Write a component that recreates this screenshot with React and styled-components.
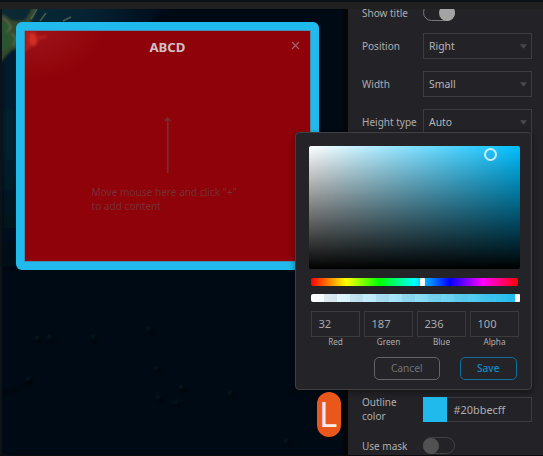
import React from "react";
import styled, { createGlobalStyle } from "styled-components";

const Global = createGlobalStyle`
  * { box-sizing: border-box; }
  body { margin: 0; background: #232327; font-family: "Noto Sans", "Open Sans", sans-serif; color: #adadaf; overflow: hidden; }
`;

const Window = styled.div`
  position: relative;
  display: flex;
  flex-direction: column;
  width: 543px;
  height: 456px;
  overflow: hidden;
  border-bottom: 1px solid #0c0c0f;
`;
const TopBar = styled.header`
  flex: none;
  height: 9px;
  background: #202020;
  border-top: 2px solid #0a1015;
`;
const Body = styled.div`
  flex: 1;
  min-height: 0;
  display: flex;
  overflow: hidden;
`;
const MapArea = styled.main`
  position: relative;
  flex: none;
  width: 348px;
  padding: 13px 0 0 14px;
  background: #000a14;
  border-left: 2px solid #0e1118;
  border-right: 5px solid #060607;
  overflow: hidden;
`;
const Terrain = styled.svg`
  position: absolute;
  left: 0;
  top: 0;
`;
const InfoFrame = styled.section`
  position: relative;
  width: 302.8px;
  height: 248px;
  padding: 8.7px 8.5px 9px;
  border-radius: 6px;
  background: #20bbec;
`;
const InfoContent = styled.div`
  position: relative;
  display: flex;
  flex-direction: column;
  height: 100%;
  background: radial-gradient(ellipse 90px 55px at 0 0, #9c151a, #900209 90%);
  box-shadow: 0 0 0 0.6px #61728a;
`;
const RedTerrain = styled.svg`
  position: absolute;
  left: 0;
  top: 0;
`;
const InfoHeader = styled.div`
  position: relative;
  display: flex;
  justify-content: center;
  height: 34px;
  padding-top: 8px;
`;
const InfoTitle = styled.h1`
  margin: 0;
  font-size: 13.2px;
  line-height: 17px;
  font-weight: 700;
  color: #cfc0c4;
`;
const CloseIcon = styled.svg`
  position: absolute;
  right: 10.3px;
  top: 10.2px;
`;
const Arrow = styled.svg`
  margin: 52px 0 0 138px;
`;
const Hint = styled.p`
  margin: 12px 0 0 67px;
  width: 160px;
  font-size: 10.1px;
  line-height: 14px;
  color: #743037;
`;
const Sidebar = styled.aside`
  flex: 1;
  display: flex;
  flex-direction: column;
  padding-left: 14px;
  background: #232327;
`;
const Field = styled.div`
  flex: none;
  display: flex;
  align-items: center;
  height: ${(p) => p.$height}px;
  margin-top: ${(p) => p.$gap || 0}px;
`;
const FieldLabel = styled.label`
  width: 61px;
  padding-right: ${(p) => p.$pad || 0}px;
  font-size: 10px;
  line-height: 14px;
  white-space: ${(p) => (p.$pad ? "normal" : "nowrap")};
`;
const Select = styled.div`
  display: flex;
  align-items: center;
  justify-content: space-between;
  width: 108.5px;
  height: 26px;
  padding: 0 4px 0 5px;
  border: 1px solid #3d3d40;
  font-size: 10.4px;
  color: #b6b6b8;
`;
const Switch = styled.div`
  display: flex;
  align-items: center;
  justify-content: ${(p) => (p.$on ? "flex-end" : "flex-start")};
  width: 32px;
  height: 17px;
  border: 1px solid ${(p) => (p.$on ? "#79797b" : "#434346")};
  border-radius: 9px;
  &::after {
    content: "";
    width: 16px;
    height: 16px;
    margin: 0 -1px;
    border-radius: 50%;
    background: ${(p) => (p.$on ? "#a3a3a4" : "#515153")};
  }
`;
const ColorField = styled.div`
  display: flex;
  align-items: center;
  width: 108.5px;
  height: 25px;
  border: 1px solid #3d3d40;
  font-size: 10.9px;
  color: #adadaf;
`;
const Swatch = styled.div`
  width: 24px;
  height: 25px;
  margin: 0 6.5px 0 -1px;
  background: #20bbec;
`;
const Marker = styled.div`
  position: absolute;
  left: 317px;
  top: 392px;
  width: 24px;
  height: 45px;
  border-radius: 12px;
  background: #ea571b;
  color: #f7ece8;
  font-size: 35px;
  line-height: 43px;
  padding-left: 2px;
`;
const Popover = styled.div`
  position: absolute;
  left: 295px;
  top: 132px;
  width: 237px;
  height: 258px;
  padding: 13.2px 10.5px 0 13px;
  border: 1px solid #404043;
  border-radius: 4px;
  background: #242428;
  box-shadow: 0 2px 6px rgba(0, 0, 0, 0.45);
  display: flex;
  flex-direction: column;
`;
const Saturation = styled.div`
  position: relative;
  flex: none;
  width: 211.2px;
  height: 123px;
  border-radius: 2px;
  background: linear-gradient(to top, #000, transparent), linear-gradient(to right, #fff, #00bfff);
`;
const Ring = styled.div`
  position: absolute;
  left: 175px;
  top: 2.3px;
  width: 13px;
  height: 13px;
  border: 2px solid #c9eefb;
  border-radius: 50%;
`;
const Bar = styled.div`
  position: relative;
  flex: none;
  width: 207px;
  height: 8.5px;
  margin: ${(p) => p.$gap}px 0 0 2px;
  border-radius: 2px;
`;
const HueBar = styled(Bar)`
  background: linear-gradient(to right, #f00, #ff0 17%, #0f0 33%, #0ff 50%, #00f 67%, #f0f 83%, #f00);
`;
const AlphaBar = styled(Bar)`
  background: linear-gradient(to right, rgba(32, 187, 236, 0), #20bbec),
    conic-gradient(#ececee 25%, #fff 0 50%, #ececee 0 75%, #fff 0) 0 0 / 26px 17px;
`;
const Thumb = styled.div`
  position: absolute;
  left: ${(p) => p.$left}px;
  top: 0;
  width: 5px;
  height: 100%;
  border-radius: 1px;
  background: #fff;
`;
const Channels = styled.div`
  display: flex;
  gap: 4px;
  margin: 8.2px 0 0 2px;
`;
const Channel = styled.label`
  width: 49px;
  text-align: center;
  font-size: 8.2px;
  line-height: 10px;
`;
const ChannelValue = styled.div`
  height: 26px;
  padding-left: 6.5px;
  border: 1px solid #3b3b3e;
  text-align: left;
  font-size: 11.1px;
  line-height: 24px;
  color: #a9a9ab;
`;
const Actions = styled.div`
  display: flex;
  justify-content: flex-end;
  gap: 20px;
  margin: 10px 4px 0 0;
`;
const Button = styled.button`
  width: ${(p) => (p.$primary ? 56.5 : 66.5)}px;
  height: 23px;
  padding: 0 0 1px;
  border: 1px solid ${(p) => (p.$primary ? "#0e6e9c" : "#646467")};
  border-radius: 5px;
  background: transparent;
  color: ${(p) => (p.$primary ? "#118ac6" : "#727275")};
  font-family: inherit;
  font-size: 10.2px;
  font-weight: ${(p) => (p.$primary ? 500 : 400)};
`;

const Caret = () => (
  <svg width="7" height="5" viewBox="0 0 7 5"><path d="M0 0.3h7L3.5 4.7z" fill="#4a4a4d" /></svg>
);

const selects = [["Position", "Right"], ["Width", "Small"], ["Height type", "Auto"]];
const channels = [["Red", 32], ["Green", 187], ["Blue", 236], ["Alpha", 100]];
const islets = [[37, 338], [49, 337], [93, 337], [148, 329], [28, 379], [156, 368], [158, 397], [176, 402], [181, 387], [230, 393], [286, 441]];

export default function App() {
  return (
    <Window>
      <Global />
      <TopBar />
      <Body>
        <MapArea>
          <Terrain width="341" height="447" viewBox="2 9 341 447">
            <defs>
              <filter id="soft" x="-30%" y="-30%" width="160%" height="160%"><feGaussianBlur stdDeviation="3" /></filter>
              <filter id="land" x="-20%" y="-20%" width="140%" height="140%" colorInterpolationFilters="sRGB"><feGaussianBlur stdDeviation="0.8" /></filter>
              <linearGradient id="shelf" x1="0" y1="0" x2="1" y2="0">
                <stop offset="0" stopColor="#0b2a32" />
                <stop offset="0.5" stopColor="#052334" />
                <stop offset="1" stopColor="#000a18" />
              </linearGradient>
              <linearGradient id="coast" x1="0" y1="0" x2="0" y2="1">
                <stop offset="0" stopColor="#021b2d" />
                <stop offset="0.5" stopColor="#04222f" />
                <stop offset="1" stopColor="#000a14" />
              </linearGradient>
            </defs>
            <path d="M2 9h168l-30 18H2z" fill="url(#shelf)" />
            <path d="M2 30h16v236H2z" fill="url(#coast)" filter="url(#soft)" />
            <g filter="url(#land)">
              <path d="M0 14l5 1 6 5 7 1 7-1 4-6 3-6h5l-3 8-5 8H18v25l-6 1-6 6-6 8z" fill="#35482f" />
              <path d="M0 24l8-2 5 4-4 7 6 2-1 9-6 4-8 5z" fill="#2c5431" />
              <path d="M2 18l6 4 3 6-4 4M12 33l4 6-3 7" stroke="#66704c" strokeWidth="1.5" fill="none" />
            </g>
            <path d="M31 19l6-10M40 21l6-8M63 21l8-4" stroke="#53695c" strokeWidth="1.5" opacity="0.8" />
            {islets.map(([x, y]) => (
              <g key={`${x}-${y}`} filter="url(#land)">
                <circle cx={x} cy={y} r="1.5" fill="#06262b" />
                <ellipse cx={x + 2.5} cy={y + 3} rx="3.5" ry="2.5" fill="#00060c" />
              </g>
            ))}
            <path d="M4 393l16-4 12-9" stroke="#00050c" fill="none" strokeWidth="2" filter="url(#land)" />
          </Terrain>
          <InfoFrame>
            <InfoContent>
              <RedTerrain width="90" height="60" viewBox="0 0 90 60">
                <defs><filter id="edge" colorInterpolationFilters="sRGB"><feGaussianBlur stdDeviation="1" /></filter></defs>
                <g filter="url(#edge)">
                  <path d="M0 0h11l1 5 11-1-2 3-7 2-3 6-5 1-6 5z" fill="#b01e1d" />
                  <path d="M5 2l5 1 2 8-4 4-4-4z" fill="#d12f22" />
                </g>
              </RedTerrain>
              <InfoHeader>
                <InfoTitle>ABCD</InfoTitle>
                <CloseIcon width="9" height="9" viewBox="0 0 9 9"><path d="M1 1l7 7M8 1l-7 7" stroke="#a0626c" strokeWidth="1.2" /></CloseIcon>
              </InfoHeader>
              <Arrow width="9" height="56" viewBox="0 0 9 56"><path d="M4.7 1v55M2 4l2.7-3 2.7 3" fill="none" stroke="#70303a" strokeWidth="1.6" /></Arrow>
              <Hint>Move mouse here and click "+"<br />to add content</Hint>
            </InfoContent>
          </InfoFrame>
        </MapArea>
        <Sidebar>
          <Field $height={17} $gap={-5}><FieldLabel>Show title</FieldLabel><Switch $on /></Field>
          {selects.map(([label, value]) => (
            <Field key={label} $height={26} $gap={12}>
              <FieldLabel>{label}</FieldLabel>
              <Select>{value}<Caret /></Select>
            </Field>
          ))}
          <Field $height={28} $gap={260}>
            <FieldLabel $pad={20}>Outline color</FieldLabel>
            <ColorField><Swatch />#20bbecff</ColorField>
          </Field>
          <Field $height={17} $gap={14}><FieldLabel>Use mask</FieldLabel><Switch /></Field>
        </Sidebar>
      </Body>
      <Popover>
        <Saturation><Ring /></Saturation>
        <HueBar $gap={8.8}><Thumb $left={109} /></HueBar>
        <AlphaBar $gap={7.5}><Thumb $left={204} /></AlphaBar>
        <Channels>
          {channels.map(([name, value]) => (
            <Channel key={name}><ChannelValue>{value}</ChannelValue>{name}</Channel>
          ))}
        </Channels>
        <Actions><Button>Cancel</Button><Button $primary>Save</Button></Actions>
      </Popover>
      <Marker>L</Marker>
    </Window>
  );
}
